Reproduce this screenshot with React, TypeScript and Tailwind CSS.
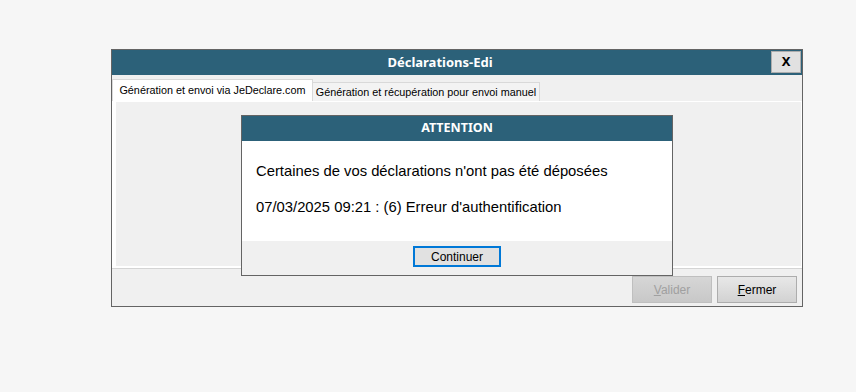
import React from "react";

export default function App() {
  const ui = { fontFamily: '"Noto Sans", "DejaVu Sans", sans-serif' };
  const tab = { fontFamily: '"Liberation Sans", Arial, sans-serif' };
  const arial = { fontFamily: '"Liberation Sans", Arial, sans-serif' };
  return (
    <div className="w-[856px] h-[392px] bg-[#f6f6f6] pt-[49px] pl-[111px]" style={ui}>
      <div className="relative w-[692px] h-[258px] border border-[#646464] bg-[#f0f0f0] flex flex-col">
        {/* Title bar */}
        <div className="h-[25px] bg-[#2c6179] flex items-center relative shrink-0">
          <div className="flex-1 pr-[34px] text-center text-white font-bold text-[13px]" style={ui}>
            Déclarations-Edi
          </div>
          <div className="absolute right-[1px] top-[1px] w-[30px] h-[22px] bg-[#e1e1e1] border border-[#adadad] flex items-center justify-center text-[13px] font-bold text-black">
            X
          </div>
        </div>
        {/* Tabs */}
        <div className="flex items-end h-[26px] pt-[4px] shrink-0" style={tab}>
          <div className="h-[22px] w-[201px] bg-white border border-b-0 border-[#d9d9d9] flex items-center justify-center text-[10.8px] text-black whitespace-nowrap">
            Génération et envoi via JeDeclare.com
          </div>
          <div className="h-[19px] w-[227px] bg-[#f3f3f3] border border-b-0 border-l-0 border-[#d9d9d9] flex items-center justify-center text-[10.8px] text-black whitespace-nowrap">
            Génération et récupération pour envoi manuel
          </div>
        </div>
        {/* Tab page */}
        <div className="h-[167px] border-l-[4px] border-t border-r border-b-[2px] border-white shrink-0">
          <div className="h-full bg-[#f0f0f0]"></div>
        </div>
        <div className="h-px bg-[#d4d4d4] shrink-0"></div>
        {/* Footer */}
        <div className="flex justify-end gap-[5px] pr-[5px] pt-[7px]" style={tab}>
          <div className="w-[80px] h-[27px] bg-gradient-to-b from-[#d6d6d6] to-[#c8c8c8] border border-[#bfbfbf] flex items-center justify-center text-[12px] text-[#a0a0a0]">
            <span><span className="underline">V</span>alider</span>
          </div>
          <div className="w-[80px] h-[27px] bg-gradient-to-b from-[#e8e8e8] to-[#d2d2d2] border border-[#adadad] flex items-center justify-center text-[12px] text-black">
            <span><span className="underline">F</span>ermer</span>
          </div>
        </div>

        {/* Modal */}
        <div className="absolute left-[129px] top-[65px] w-[432px] h-[161px] border border-[#646464] bg-white flex flex-col">
          <div className="h-[25px] bg-[#2c6179] flex items-center justify-center text-white font-bold text-[12.5px] shrink-0">
            ATTENTION
          </div>
          <div className="h-[100px] bg-white pl-[14px] pt-[18px] text-[14.8px] text-black shrink-0" style={arial}>
            <div className="leading-[24px]">Certaines de vos déclarations n'ont pas été déposées</div>
            <div className="leading-[24px] mt-[12px]">07/03/2025 09:21 : (6) Erreur d'authentification</div>
          </div>
          <div className="flex-1 bg-[#f0f0f0] flex justify-center pt-[5px]">
            <div className="w-[88px] h-[21px] bg-[#e1e1e1] border-2 border-[#0078d7] flex items-center justify-center text-[12px] text-black" style={tab}>
              Continuer
            </div>
          </div>
        </div>
      </div>
    </div>
  );
}
